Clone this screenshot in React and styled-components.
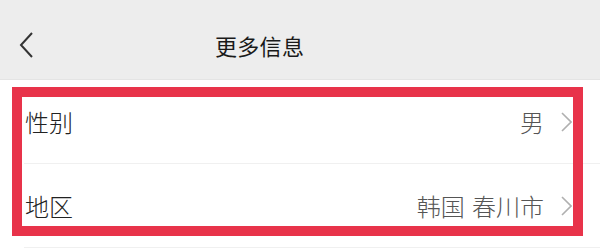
import styled, { createGlobalStyle } from "styled-components";

const Global = createGlobalStyle`
  html, body {
    margin: 0;
    padding: 0;
    background: #ffffff;
    font-family: "Noto Sans CJK SC", "Noto Sans", sans-serif;
  }
`;

const Page = styled.div`
  width: 600px;
  height: 251px;
  overflow: hidden;
  background: #ffffff;
`;

const Header = styled.div`
  height: 80px;
  background: #ededed;
  border-bottom: 1px solid #e4e4e4;
  display: flex;
  align-items: center;
  padding: 10px 0 0 19px;
  box-sizing: border-box;
`;

const Back = styled.button`
  border: 0;
  background: none;
  padding: 0;
  display: flex;
  width: 16px;
  height: 26px;
`;

const Title = styled.h1`
  margin: 0 0 0 180px;
  font-size: 22px;
  font-weight: 400;
  color: #1a1a1a;
  letter-spacing: 0.3px;
`;

const List = styled.div`
  position: relative;
`;

const Row = styled.div`
  height: 83px;
  display: flex;
  align-items: center;
  margin-left: 24px;
  padding-right: 28px;
  border-bottom: 1px solid #f0f0f0;
`;

const Label = styled.span`
  flex: 1;
  margin-left: 1px;
  font-size: 24px;
  font-weight: 300;
  color: #222222;
`;

const Value = styled.span`
  font-size: 24px;
  font-weight: 300;
  color: #555555;
  margin-right: 17px;
  word-spacing: 2px;
`;

const Highlight = styled.div`
  position: absolute;
  left: 12px;
  top: 7px;
  width: 571px;
  height: 149px;
  border: 10px solid #e8334a;
  box-sizing: border-box;
  pointer-events: none;
`;

const Chevron = () => (
  <svg width="11" height="20" viewBox="0 0 11 20">
    <polyline points="1,1 10,10 1,19" fill="none" stroke="#b0b0b0" strokeWidth="1.6" />
  </svg>
);

const rows = [
  { label: "性别", value: "男" },
  { label: "地区", value: "韩国 春川市" },
];

const App = () => {
  return (
    <Page>
      <Global />
      <Header>
        <Back aria-label="返回">
          <svg width="16" height="26" viewBox="0 0 16 26">
            <polyline points="13,1 2,13 13,25" fill="none" stroke="#333333" strokeWidth="2" />
          </svg>
        </Back>
        <Title>更多信息</Title>
      </Header>
      <List>
        {rows.map((r) => (
          <Row key={r.label}>
            <Label>{r.label}</Label>
            <Value>{r.value}</Value>
            <Chevron />
          </Row>
        ))}
        <Highlight />
      </List>
    </Page>
  );
};

export default App;
